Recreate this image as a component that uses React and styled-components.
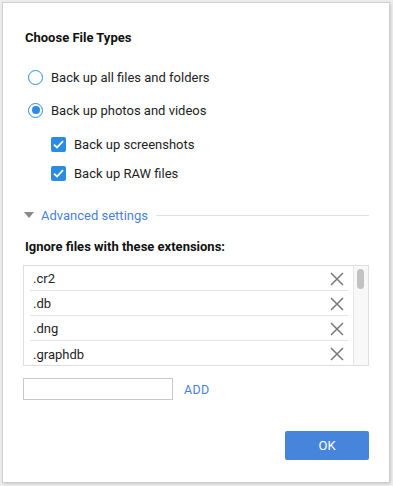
import React, { useState } from "react";
import styled, { createGlobalStyle } from "styled-components";

const GlobalStyle = createGlobalStyle`
  html, body {
    margin: 0;
    padding: 0;
    background: #ececec;
    font-family: Roboto, "Liberation Sans", Arial, sans-serif;
  }
`;

const Frame = styled.div`
  width: 393px;
  height: 486px;
  box-sizing: border-box;
  padding: 3px 4px 4px 3px;
`;

const Dialog = styled.div`
  height: 479px;
  box-sizing: border-box;
  background: #fff;
  box-shadow: 0 0 0 1px #cfcfcf, 1px 1px 3px rgba(0, 0, 0, 0.25);
  padding: 27px 20px 22px 20px;
  display: flex;
  flex-direction: column;
`;

const Title = styled.div`
  font-size: 13px;
  font-weight: 700;
  line-height: 16px;
  color: #111;
  margin-left: 2px;
  margin-top: ${p => p.$top || 0}px;
  margin-bottom: ${p => p.$gap || 0}px;
`;

const OptionRow = styled.label`
  display: flex;
  align-items: center;
  height: 20px;
  gap: 8px;
  font-size: 13px;
  color: #1e1e1e;
  margin-left: ${p => p.$indent || 0}px;
  margin-top: ${p => p.$gap || 0}px;
  cursor: pointer;
`;

const Radio = styled.span`
  width: 15px;
  height: 15px;
  box-sizing: border-box;
  border: 1.7px solid #2b8ae4;
  border-radius: 50%;
  display: flex;
  align-items: center;
  justify-content: center;
  &::after {
    content: "";
    width: 8px;
    height: 8px;
    border-radius: 50%;
    background: #2b8ae4;
    display: ${p => (p.$checked ? "block" : "none")};
  }
`;

const Check = styled.span`
  width: 15px;
  height: 15px;
  border-radius: 2px;
  background: #2b8be3;
  display: flex;
  align-items: center;
  justify-content: center;
`;

const AdvancedRow = styled.div`
  display: flex;
  align-items: center;
  height: 20px;
  margin-top: 22px;
  margin-left: 1px;
`;

const Triangle = styled.span`
  width: 0;
  height: 0;
  border-left: 5px solid transparent;
  border-right: 5px solid transparent;
  border-top: 6px solid #8a8a8a;
  margin-right: 7px;
`;

const LinkText = styled.span`
  font-size: 13px;
  color: #4a7fdf;
`;

const Rule = styled.div`
  flex: 1;
  height: 1px;
  background: #e0e0e0;
  margin-left: 8px;
`;

const ListBox = styled.div`
  margin-top: 10px;
  height: 99px;
  border: 1px solid #dedede;
  display: flex;
  overflow: hidden;
`;

const Rows = styled.div`
  flex: 1;
  padding: 0 5px 0 6px;
`;

const Row = styled.div`
  height: 25px;
  box-sizing: border-box;
  display: flex;
  align-items: center;
  justify-content: space-between;
  padding: 1px 4px 0 3px;
  border-bottom: ${p => (p.$last ? "none" : "1px solid #e4e4e4")};
  font-size: 13px;
  color: #1e1e1e;
`;

const Scroll = styled.div`
  width: 15px;
  background: #f8f8f8;
  border-left: 1px solid #e6e6e6;
  padding: 3px 0 0 3px;
  box-sizing: border-box;
`;

const Thumb = styled.div`
  width: 7px;
  height: 20px;
  border-radius: 4px;
  background: #c2c2c2;
`;

const AddRow = styled.div`
  display: flex;
  align-items: center;
  margin-top: 12px;
  gap: 11px;
`;

const Input = styled.input`
  width: 150px;
  height: 22px;
  box-sizing: border-box;
  border: 1px solid #c9c9c9;
  outline: none;
  font-size: 13px;
  padding: 0 4px;
`;

const AddButton = styled.button`
  border: none;
  background: none;
  padding: 0;
  font-family: inherit;
  font-size: 12.5px;
  color: #4a7fdf;
  letter-spacing: 0.3px;
  cursor: pointer;
`;

const Footer = styled.div`
  margin-top: auto;
  display: flex;
  justify-content: flex-end;
`;

const OkButton = styled.button`
  width: 84px;
  height: 29px;
  border: none;
  border-radius: 2px;
  background: #4784dc;
  color: #fff;
  font-family: inherit;
  font-size: 13px;
  cursor: pointer;
`;

const CheckMark = () => (
  <svg width="11" height="9" viewBox="0 0 11 9">
    <path d="M1 4.6 L4 7.5 L10 1.2" fill="none" stroke="#fff" strokeWidth="1.8" />
  </svg>
);

const CloseIcon = () => (
  <svg width="14" height="14" viewBox="0 0 14 14">
    <path d="M1 1 L13 13 M13 1 L1 13" stroke="#777" strokeWidth="1.5" />
  </svg>
);

const extensions = [".cr2", ".db", ".dng", ".graphdb"];

export default function App() {
  const [mode, setMode] = useState("photos");

  return (
    <Frame>
      <GlobalStyle />
      <Dialog>
        <Title $gap={21}>Choose File Types</Title>
        <OptionRow $indent={5} onClick={() => setMode("all")}>
          <Radio $checked={mode === "all"} />
          Back up all files and folders
        </OptionRow>
        <OptionRow $indent={5} $gap={13} onClick={() => setMode("photos")}>
          <Radio $checked={mode === "photos"} />
          Back up photos and videos
        </OptionRow>
        <OptionRow $indent={28} $gap={14}>
          <Check>
            <CheckMark />
          </Check>
          Back up screenshots
        </OptionRow>
        <OptionRow $indent={28} $gap={9}>
          <Check>
            <CheckMark />
          </Check>
          Back up RAW files
        </OptionRow>
        <AdvancedRow>
          <Triangle />
          <LinkText>Advanced settings</LinkText>
          <Rule />
        </AdvancedRow>
        <Title $top={14}>Ignore files with these extensions:</Title>
        <ListBox>
          <Rows>
            {extensions.map((ext, i) => (
              <Row key={ext} $last={i === extensions.length - 1}>
                {ext}
                <CloseIcon />
              </Row>
            ))}
          </Rows>
          <Scroll>
            <Thumb />
          </Scroll>
        </ListBox>
        <AddRow>
          <Input />
          <AddButton>ADD</AddButton>
        </AddRow>
        <Footer>
          <OkButton>OK</OkButton>
        </Footer>
      </Dialog>
    </Frame>
  );
}
